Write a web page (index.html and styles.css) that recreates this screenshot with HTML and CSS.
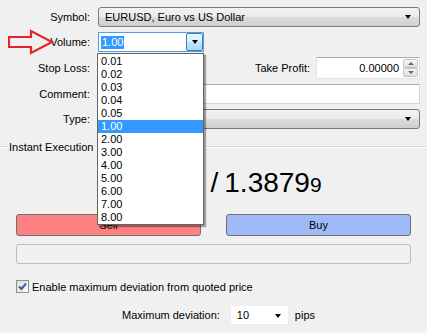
FILE: index.html
```html
<!DOCTYPE html>
<html lang="en">
<head>
    <meta charset="UTF-8">
    <meta name="viewport" content="width=device-width, initial-scale=1.0">
    <title>Order</title>
    <link rel="stylesheet" href="styles.css">
</head>
<body>
<div class="window">

    <!-- Order form -->
    <div class="form">
        <label class="lbl">Symbol:</label>
        <div class="combo">EURUSD, Euro vs US Dollar<span class="caret"></span></div>

        <label class="lbl">Volume:</label>
        <div class="volume-row">
            <div class="editcombo">
                <span class="selected-text">1.00</span>
                <span class="dropbtn"><span class="caret"></span></span>
            </div>
        </div>

        <label class="lbl">Stop Loss:</label>
        <div class="sl-row">
            <div class="spin"><span class="spin-val"></span><span class="spinner"><span class="up"></span><span class="down"></span></span></div>
            <label class="lbl tp-lbl">Take Profit:</label>
            <div class="spin"><span class="spin-val">0.00000</span><span class="spinner"><span class="up"></span><span class="down"></span></span></div>
        </div>

        <label class="lbl">Comment:</label>
        <div class="edit"></div>

        <label class="lbl">Type:</label>
        <div class="combo"><span class="caret"></span></div>
    </div>

    <div class="section-title">
        <span class="line short"></span>
        <span class="title-text">Instant Execution</span>
        <span class="line"></span>
    </div>

    <!-- bid is covered by the open list -->
    <div class="quote"><span class="bid">1.3877<small>9</small></span> <span class="slash">/</span>1.3879<small>9</small></div>

    <div class="buttons">
        <button class="btn sell">Sell</button>
        <button class="btn buy">Buy</button>
    </div>

    <div class="progress"></div>

    <label class="check">
        <span class="box">
            <svg width="9" height="9" viewBox="0 0 9 9"><path d="M1 4.5 L3.5 7 L8 1.5" fill="none" stroke="#3c5a9a" stroke-width="2"/></svg>
        </span>
        Enable maximum deviation from quoted price
    </label>

    <div class="deviation">
        <span>Maximum deviation:</span>
        <div class="small-combo">10<span class="caret"></span></div>
        <span>pips</span>
    </div>

    <!-- Open volume list -->
    <ul class="dropdown">
        <li>0.01</li>
        <li>0.02</li>
        <li>0.03</li>
        <li>0.04</li>
        <li>0.05</li>
        <li class="active">1.00</li>
        <li>2.00</li>
        <li>3.00</li>
        <li>4.00</li>
        <li>5.00</li>
        <li>6.00</li>
        <li>7.00</li>
        <li>8.00</li>
    </ul>

    <!-- Red pointer arrow -->
    <svg class="pointer" width="48" height="26" viewBox="0 0 48 26">
        <polygon points="1,8 23,8 23,2 44,13 23,24 23,18 1,18" fill="none" stroke="#e3262b" stroke-width="2.2" stroke-linejoin="miter"/>
    </svg>
</div>
</body>
</html>
```

FILE: styles.css
```css
body, html {
    margin: 0;
    background-color: #f0f0f0;
    font-family: "Liberation Sans", Arial, sans-serif;
    font-size: 11px;
    color: #000;
}

.window {
    position: relative;
    width: 427px;
    height: 334px;
    box-sizing: border-box;
    border-bottom: 2px solid #f8fafc;
    overflow: hidden;
}

/* Form grid */
.form {
    display: grid;
    grid-template-columns: 90px 1fr;
    grid-template-rows: 20px 20px 22px 20px 20px;
    column-gap: 8px;
    row-gap: 5px;
    padding: 7px 7px 0 0;
}

.lbl {
    text-align: right;
    align-self: center;
}

.combo {
    position: relative;
    height: 20px;
    box-sizing: border-box;
    border: 1px solid #7a7a7a;
    border-radius: 3px;
    background: linear-gradient(#f2f2f2 0%, #ebebeb 50%, #dddddd 51%, #cfcfcf 100%);
    padding: 0 6px;
    line-height: 18px;
}

.combo .caret {
    position: absolute;
    right: 8px;
    top: 7px;
}

.caret {
    display: inline-block;
    width: 0;
    height: 0;
    border-left: 3.5px solid transparent;
    border-right: 3.5px solid transparent;
    border-top: 4px solid #000;
}

.volume-row {
    display: flex;
}

.editcombo {
    width: 106px;
    height: 20px;
    box-sizing: border-box;
    border: 1px solid #569de5;
    background: #fff;
    display: flex;
    align-items: center;
    padding-left: 2px;
}

.selected-text {
    background: #3399ff;
    color: #fff;
    line-height: 13px;
    padding: 0 1px;
}

.dropbtn {
    margin-left: auto;
    width: 17px;
    height: 18px;
    box-sizing: border-box;
    border: 1px solid #3c7fb1;
    border-radius: 2px;
    background: linear-gradient(#eaf6fd 0%, #d9f0fc 50%, #bee6fd 51%, #a7d9f5 100%);
    display: flex;
    align-items: center;
    justify-content: center;
}

.sl-row {
    display: flex;
    align-items: center;
}

.spin {
    width: 104px;
    height: 22px;
    box-sizing: border-box;
    border: 1px solid #e2e3ea;
    border-top-color: #abadb3;
    background: #fff;
    display: flex;
    align-items: center;
    padding-left: 4px;
}

.spin-val {
    flex: 1;
    text-align: right;
    padding-right: 4px;
}

.spinner {
    width: 15px;
    height: 18px;
    display: flex;
    flex-direction: column;
    margin-right: 1px;
}

.spinner span {
    flex: 1;
    border: 1px solid #c4c4c4;
    border-radius: 2px;
    background: linear-gradient(#f6f6f6, #dedede);
    position: relative;
}

.spinner .up::after,
.spinner .down::after {
    content: "";
    position: absolute;
    left: 4px;
    top: 2px;
    border-left: 3px solid transparent;
    border-right: 3px solid transparent;
}

.spinner .up::after {
    border-bottom: 3px solid #6a6a6a;
}

.spinner .down::after {
    border-top: 3px solid #6a6a6a;
}

.tp-lbl {
    margin-left: auto;
    margin-right: 6px;
}

.edit {
    height: 20px;
    box-sizing: border-box;
    border: 1px solid #d4d6dc;
    border-top-color: #abadb3;
    background: #fff;
}

/* Section title with etched line */
.section-title {
    display: flex;
    align-items: center;
    margin-top: 11px;
    height: 13px;
}

.line {
    flex: 1;
    height: 0;
    border-top: 1px solid #d5dfe5;
    border-bottom: 1px solid #fff;
}

.line.short {
    flex: 0 0 8px;
}

.title-text {
    padding: 0 1px;
}

/* Quote */
.quote {
    height: 47px;
    padding-top: 14px;
    text-align: center;
    font-size: 28px;
    line-height: 32px;
    white-space: nowrap;
}

.quote small {
    font-size: 21px;
}

.bid {
    visibility: hidden;
}

.slash {
    margin-right: 6px;
}

.buttons {
    display: flex;
    gap: 25px;
    padding: 0 16px;
}

.btn {
    flex: 1;
    height: 22px;
    border: 1px solid #707070;
    border-radius: 3px;
    font-family: "Liberation Sans", Arial, sans-serif;
    font-size: 11px;
    color: #000;
    padding: 0;
}

.sell {
    background-color: #ff8080;
}

.buy {
    background-color: #9fbaf6;
}

.progress {
    margin: 8px 16px 0;
    height: 20px;
    box-sizing: border-box;
    border: 1px solid #bcbcbc;
    border-radius: 3px;
    background: #f0f0f0;
}

.check {
    display: flex;
    align-items: center;
    gap: 3px;
    margin-top: 16px;
    padding-left: 16px;
    height: 13px;
}

.box {
    width: 13px;
    height: 13px;
    box-sizing: border-box;
    border: 1px solid #8e8f8f;
    background: linear-gradient(135deg, #dcdcdc, #fbfbfb);
    display: flex;
    align-items: center;
    justify-content: center;
}

.deviation {
    display: flex;
    align-items: center;
    margin-top: 12px;
    padding-left: 122px;
    height: 20px;
}

.small-combo {
    position: relative;
    width: 59px;
    height: 20px;
    box-sizing: border-box;
    border: 1px solid #ececec;
    background: #fff;
    margin: 0 6px 0 10px;
    padding-left: 6px;
    line-height: 18px;
}

.small-combo .caret {
    position: absolute;
    right: 7px;
    top: 8px;
}

/* Popup list */
.dropdown {
    position: absolute;
    left: 97px;
    top: 53px;
    width: 107px;
    margin: 0;
    padding: 1px 0 0;
    list-style: none;
    background: #fff;
    border: 1px solid #646464;
    box-sizing: border-box;
    box-shadow: 2px 2px 1px rgba(0, 0, 0, 0.35);
}

.dropdown li {
    height: 13px;
    line-height: 13px;
    padding-left: 3px;
}

.dropdown li.active {
    background: #3399ff;
    color: #fff;
}

.pointer {
    position: absolute;
    left: 8px;
    top: 29px;
}
```
